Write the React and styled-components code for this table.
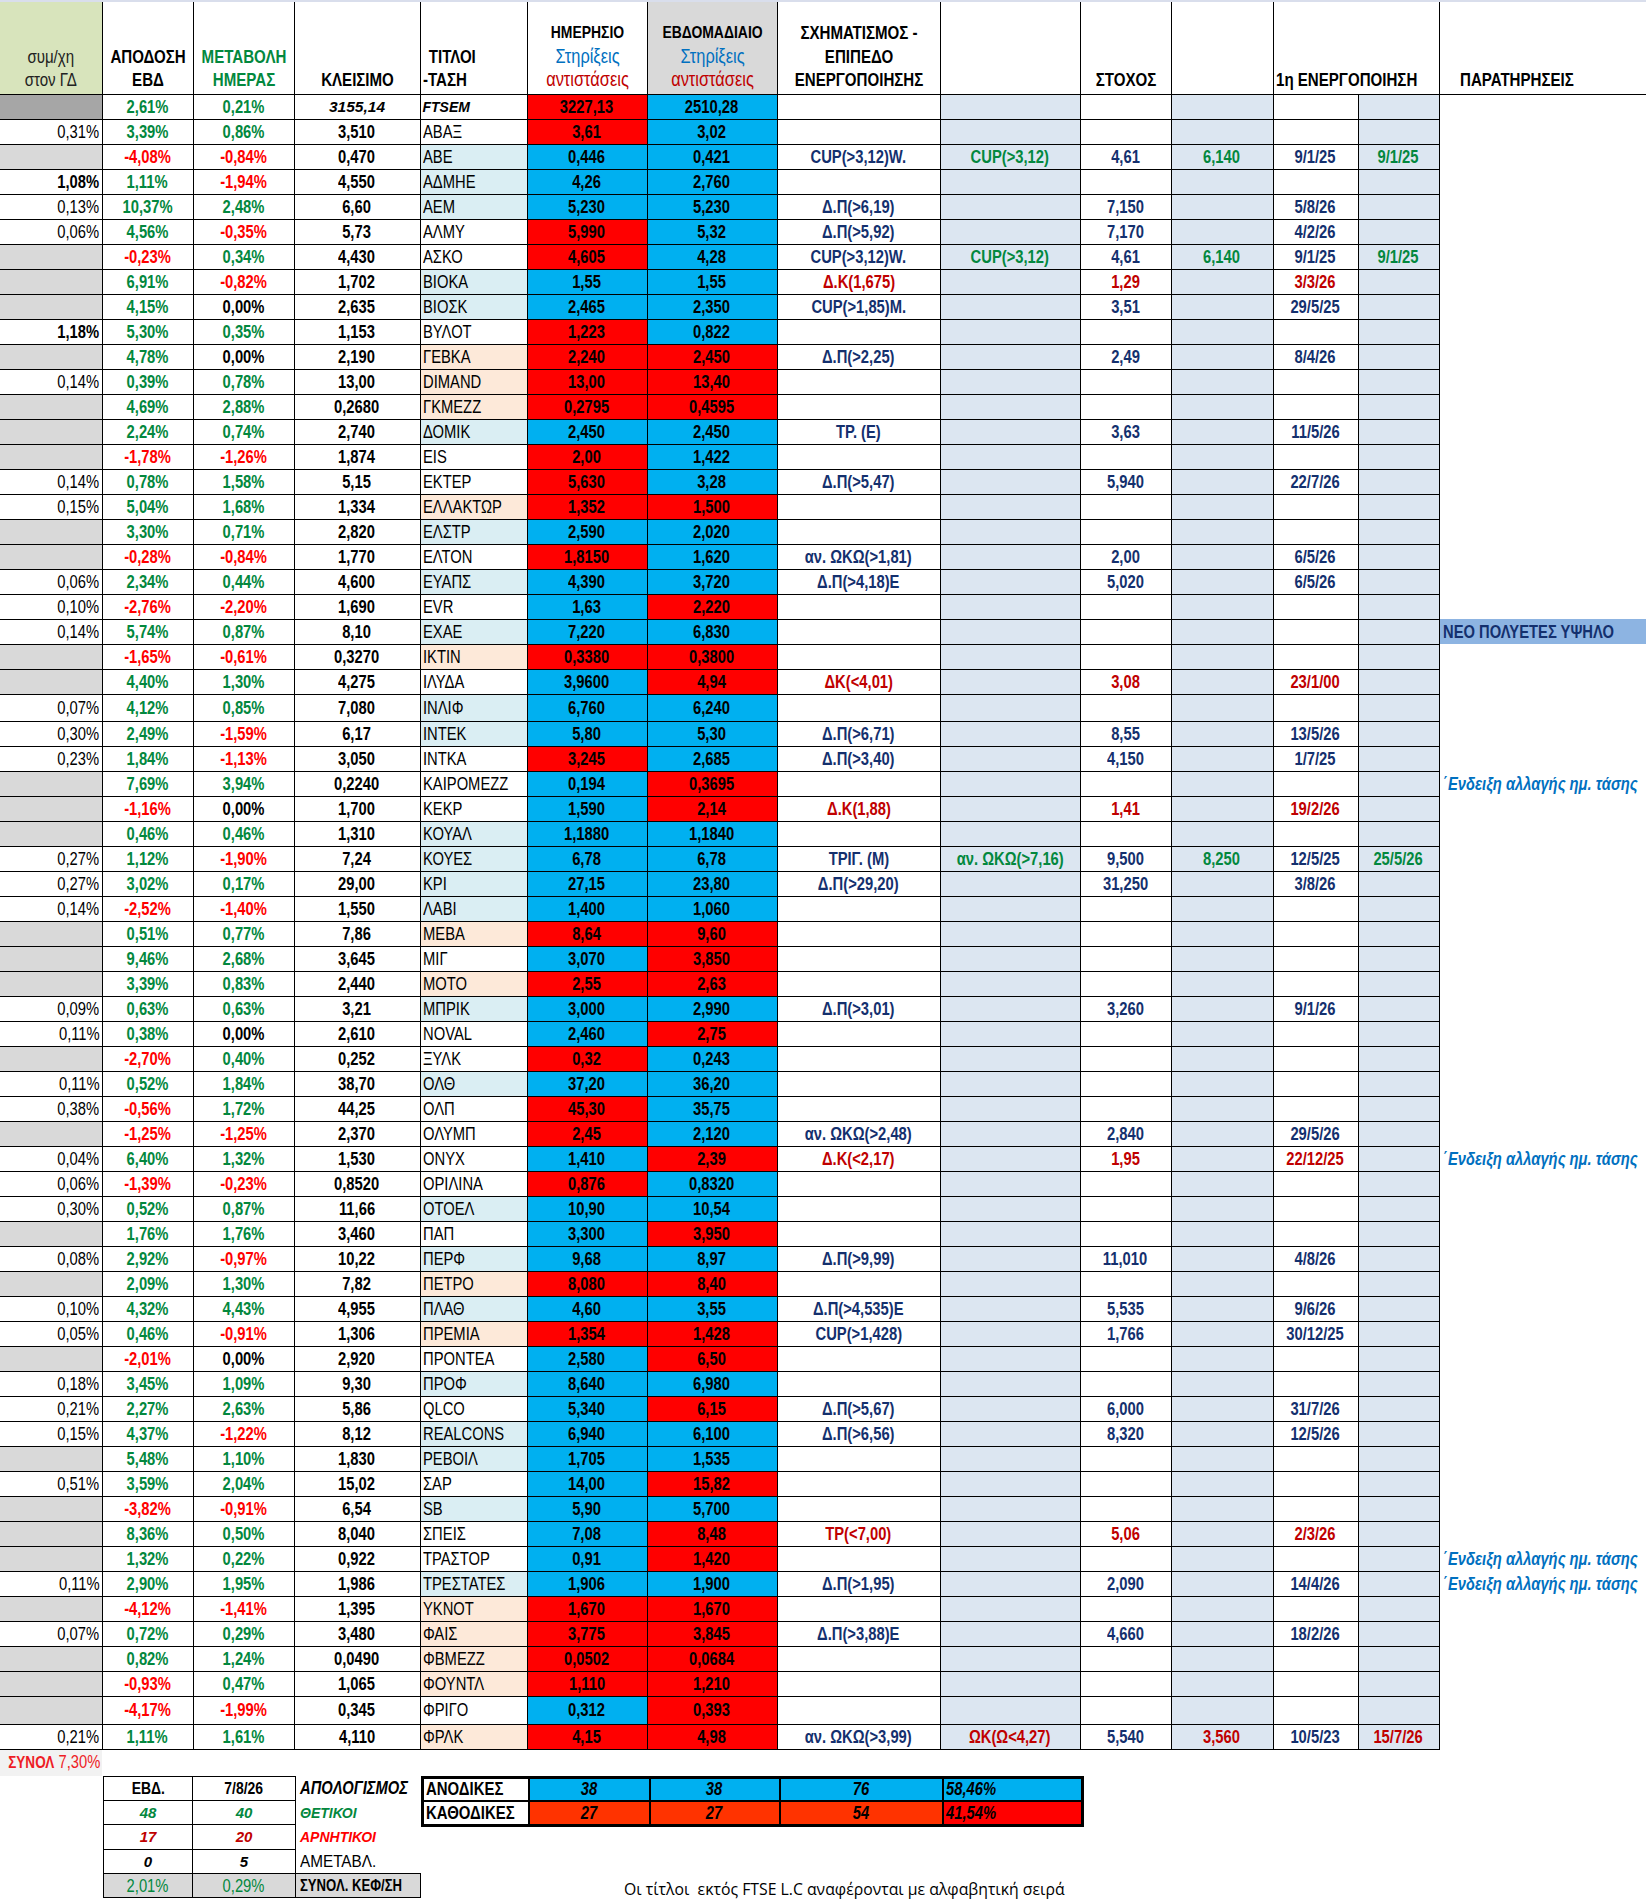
import React from "react";
import styled, { createGlobalStyle } from "styled-components";

// Arial Narrow is Arial squeezed to 82% – Liberation Sans has the Arial metrics
const SANS = `"Liberation Sans", Arial, sans-serif`;

const GREEN = "#03883e";
const RED = "#ff0000";
const DARKRED = "#c00000";
const NAVY = "#14306e";
const CELL_BLUE = "#00b0f0";
const CELL_RED = "#ff0000";
const ALT_BG = "#dce6f1";

const GlobalStyle = createGlobalStyle`
  body {
    margin: 0;
    background: #fff;
  }
`;

const widths = [102, 91, 101, 126, 107, 120, 130, 163, 140, 91, 102, 85, 81, 207];

// title, sym, weekly %, daily %, close, day level, day colour, week level, week colour
const rows = [
  ["FTSEM", "", "2,61%", "0,21%", "3155,14", "3227,13", "r", "2510,28", "b"],
  ["ΑΒΑΞ", "0,31%", "3,39%", "0,86%", "3,510", "3,61", "r", "3,02", "b"],
  ["ΑΒΕ", "", "-4,08%", "-0,84%", "0,470", "0,446", "b", "0,421", "b"],
  ["ΑΔΜΗΕ", "1,08%", "1,11%", "-1,94%", "4,550", "4,26", "b", "2,760", "b"],
  ["ΑΕΜ", "0,13%", "10,37%", "2,48%", "6,60", "5,230", "b", "5,230", "b"],
  ["ΑΛΜΥ", "0,06%", "4,56%", "-0,35%", "5,73", "5,990", "r", "5,32", "b"],
  ["ΑΣΚΟ", "", "-0,23%", "0,34%", "4,430", "4,605", "r", "4,28", "b"],
  ["ΒΙΟΚΑ", "", "6,91%", "-0,82%", "1,702", "1,55", "b", "1,55", "b"],
  ["ΒΙΟΣΚ", "", "4,15%", "0,00%", "2,635", "2,465", "b", "2,350", "b"],
  ["ΒΥΛΟΤ", "1,18%", "5,30%", "0,35%", "1,153", "1,223", "r", "0,822", "b"],
  ["ΓΕΒΚΑ", "", "4,78%", "0,00%", "2,190", "2,240", "r", "2,450", "r"],
  ["DIMAND", "0,14%", "0,39%", "0,78%", "13,00", "13,00", "r", "13,40", "r"],
  ["ΓΚΜΕΖΖ", "", "4,69%", "2,88%", "0,2680", "0,2795", "r", "0,4595", "r"],
  ["ΔΟΜΙΚ", "", "2,24%", "0,74%", "2,740", "2,450", "b", "2,450", "b"],
  ["EIS", "", "-1,78%", "-1,26%", "1,874", "2,00", "r", "1,422", "b"],
  ["ΕΚΤΕΡ", "0,14%", "0,78%", "1,58%", "5,15", "5,630", "r", "3,28", "b"],
  ["ΕΛΛΑΚΤΩΡ", "0,15%", "5,04%", "1,68%", "1,334", "1,352", "r", "1,500", "r"],
  ["ΕΛΣΤΡ", "", "3,30%", "0,71%", "2,820", "2,590", "b", "2,020", "b"],
  ["ΕΛΤΟΝ", "", "-0,28%", "-0,84%", "1,770", "1,8150", "r", "1,620", "b"],
  ["ΕΥΑΠΣ", "0,06%", "2,34%", "0,44%", "4,600", "4,390", "b", "3,720", "b"],
  ["EVR", "0,10%", "-2,76%", "-2,20%", "1,690", "1,63", "b", "2,220", "r"],
  ["ΕΧΑΕ", "0,14%", "5,74%", "0,87%", "8,10", "7,220", "b", "6,830", "b"],
  ["ΙΚΤΙΝ", "", "-1,65%", "-0,61%", "0,3270", "0,3380", "r", "0,3800", "r"],
  ["ΙΛΥΔΑ", "", "4,40%", "1,30%", "4,275", "3,9600", "b", "4,94", "r"],
  ["ΙΝΛΙΦ", "0,07%", "4,12%", "0,85%", "7,080", "6,760", "b", "6,240", "b"],
  ["ΙΝΤΕΚ", "0,30%", "2,49%", "-1,59%", "6,17", "5,80", "b", "5,30", "b"],
  ["ΙΝΤΚΑ", "0,23%", "1,84%", "-1,13%", "3,050", "3,245", "r", "2,685", "b"],
  ["ΚΑΙΡΟΜΕΖΖ", "", "7,69%", "3,94%", "0,2240", "0,194", "b", "0,3695", "r"],
  ["ΚΕΚΡ", "", "-1,16%", "0,00%", "1,700", "1,590", "b", "2,14", "r"],
  ["ΚΟΥΑΛ", "", "0,46%", "0,46%", "1,310", "1,1880", "b", "1,1840", "b"],
  ["ΚΟΥΕΣ", "0,27%", "1,12%", "-1,90%", "7,24", "6,78", "b", "6,78", "b"],
  ["ΚΡΙ", "0,27%", "3,02%", "0,17%", "29,00", "27,15", "b", "23,80", "b"],
  ["ΛΑΒΙ", "0,14%", "-2,52%", "-1,40%", "1,550", "1,400", "b", "1,060", "b"],
  ["ΜΕΒΑ", "", "0,51%", "0,77%", "7,86", "8,64", "r", "9,60", "r"],
  ["ΜΙΓ", "", "9,46%", "2,68%", "3,645", "3,070", "b", "3,850", "r"],
  ["ΜΟΤΟ", "", "3,39%", "0,83%", "2,440", "2,55", "r", "2,63", "r"],
  ["ΜΠΡΙΚ", "0,09%", "0,63%", "0,63%", "3,21", "3,000", "b", "2,990", "b"],
  ["NOVAL", "0,11%", "0,38%", "0,00%", "2,610", "2,460", "b", "2,75", "r"],
  ["ΞΥΛΚ", "", "-2,70%", "0,40%", "0,252", "0,32", "r", "0,243", "b"],
  ["ΟΛΘ", "0,11%", "0,52%", "1,84%", "38,70", "37,20", "b", "36,20", "b"],
  ["ΟΛΠ", "0,38%", "-0,56%", "1,72%", "44,25", "45,30", "r", "35,75", "b"],
  ["ΟΛΥΜΠ", "", "-1,25%", "-1,25%", "2,370", "2,45", "r", "2,120", "b"],
  ["ΟΝΥΧ", "0,04%", "6,40%", "1,32%", "1,530", "1,410", "b", "2,39", "r"],
  ["ΟΡΙΛΙΝΑ", "0,06%", "-1,39%", "-0,23%", "0,8520", "0,876", "r", "0,8320", "b"],
  ["ΟΤΟΕΛ", "0,30%", "0,52%", "0,87%", "11,66", "10,90", "b", "10,54", "b"],
  ["ΠΑΠ", "", "1,76%", "1,76%", "3,460", "3,300", "b", "3,950", "r"],
  ["ΠΕΡΦ", "0,08%", "2,92%", "-0,97%", "10,22", "9,68", "b", "8,97", "b"],
  ["ΠΕΤΡΟ", "", "2,09%", "1,30%", "7,82", "8,080", "r", "8,40", "r"],
  ["ΠΛΑΘ", "0,10%", "4,32%", "4,43%", "4,955", "4,60", "b", "3,55", "b"],
  ["ΠΡΕΜΙΑ", "0,05%", "0,46%", "-0,91%", "1,306", "1,354", "r", "1,428", "r"],
  ["ΠΡΟΝΤΕΑ", "", "-2,01%", "0,00%", "2,920", "2,580", "b", "6,50", "r"],
  ["ΠΡΟΦ", "0,18%", "3,45%", "1,09%", "9,30", "8,640", "b", "6,980", "b"],
  ["QLCO", "0,21%", "2,27%", "2,63%", "5,86", "5,340", "b", "6,15", "r"],
  ["REALCONS", "0,15%", "4,37%", "-1,22%", "8,12", "6,940", "b", "6,100", "b"],
  ["ΡΕΒΟΙΛ", "", "5,48%", "1,10%", "1,830", "1,705", "b", "1,535", "b"],
  ["ΣΑΡ", "0,51%", "3,59%", "2,04%", "15,02", "14,00", "b", "15,82", "r"],
  ["SB", "", "-3,82%", "-0,91%", "6,54", "5,90", "b", "5,700", "b"],
  ["ΣΠΕΙΣ", "", "8,36%", "0,50%", "8,040", "7,08", "b", "8,48", "r"],
  ["ΤΡΑΣΤΟΡ", "", "1,32%", "0,22%", "0,922", "0,91", "b", "1,420", "r"],
  ["ΤΡΕΣΤΑΤΕΣ", "0,11%", "2,90%", "1,95%", "1,986", "1,906", "b", "1,900", "b"],
  ["ΥΚΝΟΤ", "", "-4,12%", "-1,41%", "1,395", "1,670", "r", "1,670", "r"],
  ["ΦΑΙΣ", "0,07%", "0,72%", "0,29%", "3,480", "3,775", "r", "3,845", "r"],
  ["ΦΒΜΕΖΖ", "", "0,82%", "1,24%", "0,0490", "0,0502", "r", "0,0684", "r"],
  ["ΦΟΥΝΤΛ", "", "-0,93%", "0,47%", "1,065", "1,110", "r", "1,210", "r"],
  ["ΦΡΙΓΟ", "", "-4,17%", "-1,99%", "0,345", "0,312", "b", "0,393", "r"],
  ["ΦΡΛΚ", "0,21%", "1,11%", "1,61%", "4,110", "4,15", "r", "4,98", "r"],
];

// pattern, colour, alt pattern, target, alt target, date, alt date, alt colour
const signals = {
  ΑΒΕ: ["CUP(>3,12)W.", "n", "CUP(>3,12)", "4,61", "6,140", "9/1/25", "9/1/25", "g"],
  ΑΕΜ: ["Δ.Π(>6,19)", "n", "", "7,150", "", "5/8/26"],
  ΑΛΜΥ: ["Δ.Π(>5,92)", "n", "", "7,170", "", "4/2/26"],
  ΑΣΚΟ: ["CUP(>3,12)W.", "n", "CUP(>3,12)", "4,61", "6,140", "9/1/25", "9/1/25", "g"],
  ΒΙΟΚΑ: ["Δ.Κ(1,675)", "r", "", "1,29", "", "3/3/26"],
  ΒΙΟΣΚ: ["CUP(>1,85)M.", "n", "", "3,51", "", "29/5/25"],
  ΓΕΒΚΑ: ["Δ.Π(>2,25)", "n", "", "2,49", "", "8/4/26"],
  ΔΟΜΙΚ: ["ΤΡ. (Ε)", "n", "", "3,63", "", "11/5/26"],
  ΕΚΤΕΡ: ["Δ.Π(>5,47)", "n", "", "5,940", "", "22/7/26"],
  ΕΛΤΟΝ: ["αν. ΩΚΩ(>1,81)", "n", "", "2,00", "", "6/5/26"],
  ΕΥΑΠΣ: ["Δ.Π(>4,18)Ε", "n", "", "5,020", "", "6/5/26"],
  ΙΛΥΔΑ: ["ΔΚ(<4,01)", "r", "", "3,08", "", "23/1/00"],
  ΙΝΤΕΚ: ["Δ.Π(>6,71)", "n", "", "8,55", "", "13/5/26"],
  ΙΝΤΚΑ: ["Δ.Π(>3,40)", "n", "", "4,150", "", "1/7/25"],
  ΚΕΚΡ: ["Δ.Κ(1,88)", "r", "", "1,41", "", "19/2/26"],
  ΚΟΥΕΣ: ["ΤΡΙΓ. (Μ)", "n", "αν. ΩΚΩ(>7,16)", "9,500", "8,250", "12/5/25", "25/5/26", "g"],
  ΚΡΙ: ["Δ.Π(>29,20)", "n", "", "31,250", "", "3/8/26"],
  ΜΠΡΙΚ: ["Δ.Π(>3,01)", "n", "", "3,260", "", "9/1/26"],
  ΟΛΥΜΠ: ["αν. ΩΚΩ(>2,48)", "n", "", "2,840", "", "29/5/26"],
  ΟΝΥΧ: ["Δ.Κ(<2,17)", "r", "", "1,95", "", "22/12/25"],
  ΠΕΡΦ: ["Δ.Π(>9,99)", "n", "", "11,010", "", "4/8/26"],
  ΠΛΑΘ: ["Δ.Π(>4,535)Ε", "n", "", "5,535", "", "9/6/26"],
  ΠΡΕΜΙΑ: ["CUP(>1,428)", "n", "", "1,766", "", "30/12/25"],
  QLCO: ["Δ.Π(>5,67)", "n", "", "6,000", "", "31/7/26"],
  REALCONS: ["Δ.Π(>6,56)", "n", "", "8,320", "", "12/5/26"],
  ΣΠΕΙΣ: ["ΤΡ(<7,00)", "r", "", "5,06", "", "2/3/26"],
  ΤΡΕΣΤΑΤΕΣ: ["Δ.Π(>1,95)", "n", "", "2,090", "", "14/4/26"],
  ΦΑΙΣ: ["Δ.Π(>3,88)Ε", "n", "", "4,660", "", "18/2/26"],
  ΦΡΛΚ: ["αν. ΩΚΩ(>3,99)", "n", "ΩΚ(Ω<4,27)", "5,540", "3,560", "10/5/23", "15/7/26", "r"],
};

const TREND_NOTE = "΄Ενδειξη αλλαγής ημ. τάσης";
const notes = {
  ΕΧΑΕ: { text: "ΝΕΟ ΠΟΛΥΕΤΕΣ ΥΨΗΛΟ", highlight: true },
  ΚΑΙΡΟΜΕΖΖ: { text: TREND_NOTE },
  ΟΝΥΧ: { text: TREND_NOTE },
  ΤΡΑΣΤΟΡ: { text: TREND_NOTE },
  ΤΡΕΣΤΑΤΕΣ: { text: TREND_NOTE },
};

const boldSym = ["1,08%", "1,18%"];
const rowHeights = { ΙΝΛΙΦ: 27, ΦΡΙΓΟ: 28 };

const pctColor = (v) => (v.startsWith("-") ? RED : v === "0,00%" ? "#000" : GREEN);
const textColor = { n: NAVY, r: DARKRED, g: GREEN };

const titleBg = (dc, wc) => {
  if (dc === "b" && wc === "b") return "#daeef3";
  if (dc === "r" && wc === "r") return "#fde9d9";
  return "#fff";
};

const squeezeMargin = {
  center: "0 -60px",
  left: "0 -120px 0 0",
  right: "0 0 0 -120px",
};

// narrow text: squeezed horizontally, negative margins keep it aligned in its cell
const Txt = styled.span`
  display: ${(p) => (p.$block ? "block" : "inline-block")};
  transform: scaleX(${(p) => p.$sx || 0.82});
  transform-origin: ${(p) => p.$align || "center"} center;
  margin: ${(p) => squeezeMargin[p.$align || "center"]};
  text-align: ${(p) => p.$align || "center"};
  color: ${(p) => p.$color || "inherit"};
  font-weight: ${(p) => (p.$light ? 400 : "inherit")};
  font-size: ${(p) => (p.$size ? `${p.$size}px` : "inherit")};
  padding-left: ${(p) => p.$indent || 0}px;
`;

const Page = styled.div`
  width: 1646px;
  border-top: 2px solid #d9deec;
`;

const Sheet = styled.table`
  width: 1646px;
  table-layout: fixed;
  border-collapse: collapse;
`;

const HeadRow = styled.tr`
  height: 92px;
`;

const Head = styled.th`
  border-left: 1px solid #000;
  border-bottom: 1px solid #000;
  vertical-align: bottom;
  padding: 0 2px 2px;
  font-family: ${SANS};
  font-size: 18.4px;
  line-height: 23.5px;
  font-weight: ${(p) => (p.$light ? 400 : 700)};
  color: ${(p) => p.$color || "#000"};
  background: ${(p) => p.$bg || "#fff"};
  text-align: ${(p) => p.$align || "center"};
  white-space: nowrap;
  &:first-child {
    border-left: none;
  }
`;

const HeadLines = ({ lines, align = "center", indent = [] }) =>
  lines.map((l, i) =>
    typeof l === "string" ? (
      <Txt key={i} $block $align={align} $indent={indent[i]}>
        {l}
      </Txt>
    ) : (
      <Txt key={i} $block $align={align} $color={l.color} $light={l.light} $size={l.size}>
        {l.text}
      </Txt>
    )
  );

const levelHead = (title) => [
  { text: title, size: 17 },
  { text: "Στηρίξεις", color: "#0070c0", light: true, size: 20 },
  { text: "αντιστάσεις", color: DARKRED, light: true, size: 20 },
];

const Row = styled.tr`
  height: ${(p) => p.$h}px;
`;

const Cell = styled.td`
  border: 1px solid #000;
  padding: 0 2px;
  font-family: ${SANS};
  font-size: ${(p) => p.$size || 18}px;
  font-weight: ${(p) => (p.$bold ? 700 : 400)};
  font-style: ${(p) => (p.$italic ? "italic" : "normal")};
  color: ${(p) => p.$color || "#000"};
  background: ${(p) => p.$bg || "#fff"};
  text-align: ${(p) => p.$align || "center"};
  line-height: 1;
  white-space: nowrap;
  &:first-child {
    border-left: none;
  }
`;

const C = ({ children, $align = "center", $sx, ...rest }) => (
  <Cell $align={$align} {...rest}>
    {children ? (
      <Txt $align={$align} $sx={$sx}>
        {children}
      </Txt>
    ) : null}
  </Cell>
);

const NoteCell = styled.td`
  border: none;
  padding: 0 3px;
  font-family: ${SANS};
  font-size: 18px;
  font-weight: 700;
  font-style: ${(p) => (p.$highlight ? "normal" : "italic")};
  color: ${(p) => (p.$highlight ? NAVY : "#0070c0")};
  background: ${(p) => (p.$highlight ? "#8db4e2" : "transparent")};
  line-height: 1;
  white-space: nowrap;
  text-align: left;
`;

const DataRow = ({ data, index }) => {
  const [title, sym, week, day, close, dl, dc, wl, wc] = data;
  const [pattern, pc, alt, target, altTarget, date, altDate, ac] = signals[title] || [];
  const main = textColor[pc];
  const altc = textColor[ac];
  const note = notes[title];
  const isIndex = index === 0;

  return (
    <Row $h={rowHeights[title] || 25}>
      <C $align="right" $bg={isIndex ? "#a6a6a6" : sym ? "#fff" : "#d9d9d9"} $bold={boldSym.includes(sym)}>
        {sym}
      </C>
      <C $bold $color={pctColor(week)}>{week}</C>
      <C $bold $color={pctColor(day)}>{day}</C>
      <C $bold $italic={isIndex} $size={isIndex ? 15.5 : 18} $sx={isIndex ? 1 : undefined}>
        {close}
      </C>
      <C
        $align="left"
        $bold={isIndex}
        $italic={isIndex}
        $size={isIndex ? 14 : 18}
        $sx={isIndex ? 1 : undefined}
        $bg={isIndex ? "#fff" : titleBg(dc, wc)}
      >
        {title}
      </C>
      <C $bold $bg={dc === "r" ? CELL_RED : CELL_BLUE}>{dl}</C>
      <C $bold $bg={wc === "r" ? CELL_RED : CELL_BLUE}>{wl}</C>
      <C $bold $color={main}>{pattern}</C>
      <C $bold $color={altc} $bg={ALT_BG}>{alt}</C>
      <C $bold $color={main}>{target}</C>
      <C $bold $color={altc} $bg={ALT_BG}>{altTarget}</C>
      <C $bold $color={main}>{date}</C>
      <C $bold $color={altc} $bg={ALT_BG}>{altDate}</C>
      <NoteCell $highlight={note && note.highlight}>
        {note ? <Txt $align="left">{note.text}</Txt> : null}
      </NoteCell>
    </Row>
  );
};

/* ---------- bottom part ---------- */

const Bottom = styled.div`
  display: flex;
  flex-direction: column;
`;

const TotalBox = styled.div`
  width: 100px;
  height: 26px;
  padding-right: 2px;
  background: #f2f2f2;
  display: flex;
  align-items: center;
  justify-content: flex-end;
  font-family: ${SANS};
  font-size: 18px;
  color: #ee1c25;
  white-space: nowrap;
`;

const TotalLabel = styled.b`
  font-size: 16.5px;
`;

const SummaryArea = styled.div`
  display: flex;
  align-items: flex-start;
  padding-left: 103px;
`;

const Summary = styled.table`
  width: 317px;
  table-layout: fixed;
  border-collapse: collapse;
`;

const SumRow = styled.tr`
  height: 24.4px;
`;

const SumCellBase = styled.td`
  border: ${(p) => (p.$plain ? "none" : "1px solid #000")};
  padding: 0 ${(p) => (p.$align === "left" ? 4 : 2)}px;
  font-family: ${SANS};
  font-size: ${(p) => p.$size || 17}px;
  font-weight: ${(p) => (p.$bold ? 700 : 400)};
  font-style: ${(p) => (p.$italic ? "italic" : "normal")};
  color: ${(p) => p.$color || "#000"};
  background: ${(p) => p.$bg || "#fff"};
  text-align: ${(p) => p.$align || "center"};
  line-height: 1;
  white-space: nowrap;
`;

const S = ({ children, $align = "center", $sx, ...rest }) => (
  <SumCellBase $align={$align} {...rest}>
    <Txt $align={$align} $sx={$sx}>
      {children}
    </Txt>
  </SumCellBase>
);

const TrendColumn = styled.div`
  width: 660px;
  display: flex;
  flex-direction: column;
`;

const Trend = styled.table`
  width: 660px;
  table-layout: fixed;
  border-collapse: collapse;
  border: 3px solid #000;
`;

const TrendRow = styled.tr`
  height: 24px;
`;

const TrendCellBase = styled.td`
  border: 2px solid #000;
  padding: 0 2px;
  font-family: ${SANS};
  font-size: 18px;
  font-weight: 700;
  font-style: ${(p) => (p.$label ? "normal" : "italic")};
  color: #000;
  background: ${(p) => p.$bg};
  text-align: ${(p) => p.$align || "center"};
  line-height: 1;
  white-space: nowrap;
`;

const T = ({ children, $align = "center", $label, ...rest }) => (
  <TrendCellBase $align={$align} $label={$label} {...rest}>
    <Txt $align={$align} $sx={$label ? 0.83 : 0.82}>
      {children}
    </Txt>
  </TrendCellBase>
);

const Footnote = styled.div`
  margin-top: 52px;
  padding-left: 203px;
  font-family: "Open Sans", "Liberation Sans", sans-serif;
  font-size: 15.8px;
  line-height: 20px;
  color: #000;
  white-space: pre;
`;

const App = () => (
  <Page>
    <GlobalStyle />
    <Sheet>
      <colgroup>
        {widths.map((w, i) => (
          <col key={i} style={{ width: w }} />
        ))}
      </colgroup>
      <thead>
        <HeadRow>
          <Head $bg="#d8e4bc" $light $color="#222">
            <HeadLines lines={["συμ/χη", "στον ΓΔ"]} />
          </Head>
          <Head>
            <HeadLines lines={["ΑΠΟΔΟΣΗ", "ΕΒΔ"]} />
          </Head>
          <Head $color={GREEN}>
            <HeadLines lines={["ΜΕΤΑΒΟΛΗ", "ΗΜΕΡΑΣ"]} />
          </Head>
          <Head>
            <HeadLines lines={["ΚΛΕΙΣΙΜΟ"]} />
          </Head>
          <Head $align="left">
            <HeadLines lines={["ΤΙΤΛΟΙ", "-ΤΑΣΗ"]} align="left" indent={[7, 0]} />
          </Head>
          <Head>
            <HeadLines lines={levelHead("ΗΜΕΡΗΣΙΟ")} />
          </Head>
          <Head $bg="#d9d9d9">
            <HeadLines lines={levelHead("ΕΒΔΟΜΑΔΙΑΙΟ")} />
          </Head>
          <Head>
            <HeadLines lines={["ΣΧΗΜΑΤΙΣΜΟΣ -", "ΕΠΙΠΕΔΟ", "ΕΝΕΡΓΟΠΟΙΗΣΗΣ"]} />
          </Head>
          <Head />
          <Head>
            <HeadLines lines={["ΣΤΟΧΟΣ"]} />
          </Head>
          <Head />
          <Head colSpan={2} $align="left">
            <HeadLines lines={["1η ΕΝΕΡΓΟΠΟΙΗΣΗ"]} align="left" />
          </Head>
          <Head $align="left">
            <HeadLines lines={["ΠΑΡΑΤΗΡΗΣΕΙΣ"]} align="left" indent={[22]} />
          </Head>
        </HeadRow>
      </thead>
      <tbody>
        {rows.map((r, i) => (
          <DataRow key={r[0]} data={r} index={i} />
        ))}
      </tbody>
    </Sheet>

    <Bottom>
      <TotalBox>
        <Txt $align="right">
          <TotalLabel>ΣΥΝΟΛ</TotalLabel> 7,30%
        </Txt>
      </TotalBox>
      <SummaryArea>
        <Summary>
          <colgroup>
            <col style={{ width: 89 }} />
            <col style={{ width: 103 }} />
            <col style={{ width: 125 }} />
          </colgroup>
          <tbody>
            <SumRow>
              <S $bold $size={17}>ΕΒΔ.</S>
              <S $bold $size={17}>7/8/26</S>
              <S $plain $bold $italic $align="left" $size={18}>ΑΠΟΛΟΓΙΣΜΟΣ</S>
            </SumRow>
            <SumRow>
              <S $bold $italic $sx={1} $size={15} $color={GREEN}>48</S>
              <S $bold $italic $sx={1} $size={15} $color={GREEN}>40</S>
              <S $plain $bold $italic $sx={1} $align="left" $size={14} $color={GREEN}>ΘΕΤΙΚΟΙ</S>
            </SumRow>
            <SumRow>
              <S $bold $italic $sx={1} $size={15} $color={DARKRED}>17</S>
              <S $bold $italic $sx={1} $size={15} $color={DARKRED}>20</S>
              <S $plain $bold $italic $sx={1} $align="left" $size={14} $color={RED}>ΑΡΝΗΤΙΚΟΙ</S>
            </SumRow>
            <SumRow>
              <S $bold $italic $sx={1} $size={15}>0</S>
              <S $bold $italic $sx={1} $size={15}>5</S>
              <S $plain $sx={0.9} $align="left" $size={17}>ΑΜΕΤΑΒΛ.</S>
            </SumRow>
            <SumRow>
              <S $bg="#d9d9d9" $color={GREEN} $size={18}>2,01%</S>
              <S $bg="#d9d9d9" $color={GREEN} $size={18}>0,29%</S>
              <S $bg="#d9d9d9" $bold $align="left" $size={16}>ΣΥΝΟΛ. ΚΕΦ/ΣΗ</S>
            </SumRow>
          </tbody>
        </Summary>

        <TrendColumn>
          <Trend>
            <colgroup>
              <col style={{ width: 106 }} />
              <col style={{ width: 121 }} />
              <col style={{ width: 130 }} />
              <col style={{ width: 163 }} />
              <col style={{ width: 140 }} />
            </colgroup>
            <tbody>
              <TrendRow>
                <T $label $bg="#fff" $align="left">ΑΝΟΔΙΚΕΣ</T>
                <T $bg={CELL_BLUE}>38</T>
                <T $bg={CELL_BLUE}>38</T>
                <T $bg={CELL_BLUE}>76</T>
                <T $bg={CELL_BLUE} $align="left">58,46%</T>
              </TrendRow>
              <TrendRow>
                <T $label $bg="#fff" $align="left">ΚΑΘΟΔΙΚΕΣ</T>
                <T $bg="#ff3300">27</T>
                <T $bg="#ff3300">27</T>
                <T $bg="#ff3300">54</T>
                <T $bg={CELL_RED} $align="left">41,54%</T>
              </TrendRow>
            </tbody>
          </Trend>
          <Footnote>{"Οι τίτλοι  εκτός FTSE L.C αναφέρονται με αλφαβητική σειρά"}</Footnote>
        </TrendColumn>
      </SummaryArea>
    </Bottom>
  </Page>
);

export default App;
